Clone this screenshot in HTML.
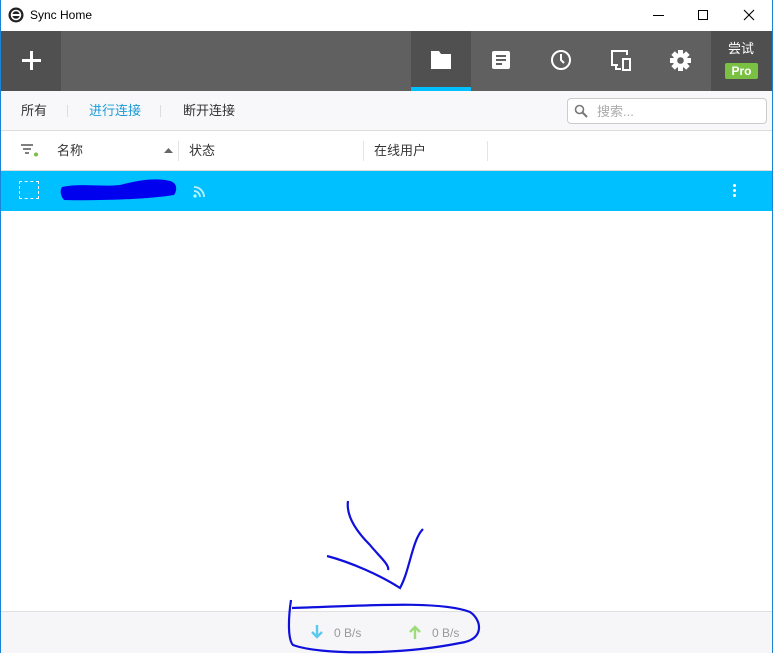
<!DOCTYPE html>
<html><head><meta charset="utf-8"><style>
*{margin:0;padding:0;box-sizing:border-box}
body{width:773px;height:655px;overflow:hidden;background:#fff;font-family:"Liberation Sans","Noto Sans CJK SC",sans-serif;position:relative}
.win{position:absolute;left:0;top:0;width:773px;height:653px;border:1px solid #1883d7;border-top:none}
.abs{position:absolute}
.cn{font-size:13px;color:#333;line-height:16px}
</style></head><body>
<div class="win"></div>
<!-- title -->
<svg class="abs" style="left:8px;top:7px" width="16" height="16" viewBox="0 0 16 16"><circle cx="8" cy="8" r="7.5" fill="#222"/><circle cx="8" cy="8" r="4.5" fill="none" stroke="#fff" stroke-width="1.5"/><rect x="3" y="7" width="10" height="2" fill="#fff"/></svg>
<div class="abs" style="left:30px;top:8px;font-size:12px;color:#000">Sync Home</div>
<div class="abs" style="left:653px;top:15px;width:11px;height:1px;background:#000"></div>
<div class="abs" style="left:698px;top:10px;width:10px;height:10px;border:1px solid #000"></div>
<svg class="abs" style="left:743px;top:9px" width="12" height="12"><path d="M1 1L11 11M11 1L1 11" stroke="#000" stroke-width="1.1"/></svg>
<!-- toolbar -->
<div class="abs" style="left:1px;top:31px;width:771px;height:60px;background:#606060"></div>
<div class="abs" style="left:1px;top:31px;width:60px;height:60px;background:#505050"></div>
<div class="abs" style="left:22px;top:59px;width:19px;height:3px;background:#fff"></div>
<div class="abs" style="left:30px;top:51px;width:3px;height:19px;background:#fff"></div>
<div class="abs" style="left:411px;top:31px;width:60px;height:60px;background:#505050"></div>
<div class="abs" style="left:411px;top:87px;width:60px;height:4px;background:#00c0ff"></div>
<svg class="abs" style="left:431px;top:51px" width="20" height="18"><path d="M0 0h8l2 3h10v15H0z" fill="#fff"/></svg>
<svg class="abs" style="left:491px;top:50px" width="20" height="20"><rect x="1" y="1" width="18" height="18" rx="2" fill="#fff"/><path d="M5 6h10M5 10h10M5 14h6" stroke="#606060" stroke-width="2"/></svg>
<svg class="abs" style="left:550px;top:49px" width="22" height="22"><circle cx="11" cy="11" r="9" fill="none" stroke="#fff" stroke-width="2"/><path d="M11 5v6l3 3" stroke="#fff" stroke-width="2" fill="none"/></svg>
<svg class="abs" style="left:611px;top:50px" width="22" height="22"><path d="M7 15H1V1h15v4" stroke="#fff" stroke-width="2" fill="none"/><rect x="12" y="9" width="7" height="11" fill="none" stroke="#fff" stroke-width="2"/><path d="M5 15v4h5" stroke="#fff" stroke-width="2" fill="none"/></svg>
<svg class="abs" style="left:670px;top:50px" width="21" height="21" viewBox="-10.5 -10.5 21 21"><g fill="#fff"><circle r="7.5"/><rect x="-2.5" y="-10.5" width="5" height="21"/><rect x="-2.5" y="-10.5" width="5" height="21" transform="rotate(45)"/><rect x="-2.5" y="-10.5" width="5" height="21" transform="rotate(90)"/><rect x="-2.5" y="-10.5" width="5" height="21" transform="rotate(135)"/></g><circle r="3.3" fill="#606060"/></svg>
<div class="abs" style="left:711px;top:31px;width:61px;height:60px;background:#4f4f4f"></div>
<div class="abs" style="left:728px;top:41px;font-size:13px;color:#fff;line-height:16px">尝试</div>
<div class="abs" style="left:725px;top:63px;width:33px;height:16px;background:#7ac143;border-radius:2px;color:#fff;font-size:12px;font-weight:bold;text-align:center;line-height:16px">Pro</div>
<!-- filter bar -->
<div class="abs" style="left:1px;top:91px;width:771px;height:40px;background:#f8f8fa;border-bottom:1px solid #ddd"></div>
<div class="abs cn" style="left:21px;top:103px">所有</div>
<div class="abs" style="left:67px;top:105px;width:1px;height:12px;background:#ddd"></div>
<div class="abs cn" style="left:89px;top:103px;color:#1a9bd7">进行连接</div>
<div class="abs" style="left:160px;top:105px;width:1px;height:12px;background:#ddd"></div>
<div class="abs cn" style="left:183px;top:103px">断开连接</div>
<div class="abs" style="left:567px;top:98px;width:200px;height:26px;border:1px solid #ccc;border-radius:4px;background:#fff"></div>
<svg class="abs" style="left:574px;top:104px" width="14" height="14"><circle cx="5.5" cy="5.5" r="4" fill="none" stroke="#777" stroke-width="1.6"/><path d="M8.5 8.5L13 13" stroke="#777" stroke-width="2"/></svg>
<div class="abs" style="left:597px;top:104px;font-size:13px;color:#aaa;line-height:16px">搜索...</div>
<!-- header -->
<svg class="abs" style="left:21px;top:144px" width="18" height="14"><path d="M0 1h12M2 5h8M4 9h4" stroke="#555" stroke-width="1.6"/><circle cx="15" cy="10.5" r="2" fill="#7ac143"/></svg>
<div class="abs cn" style="left:57px;top:143px">名称</div>
<svg class="abs" style="left:164px;top:148px" width="9" height="5"><path d="M0 5L4.5 0L9 5z" fill="#666"/></svg>
<div class="abs" style="left:178px;top:141px;width:1px;height:20px;background:#e4e4e4"></div>
<div class="abs cn" style="left:189px;top:143px">状态</div>
<div class="abs" style="left:363px;top:141px;width:1px;height:20px;background:#e4e4e4"></div>
<div class="abs cn" style="left:374px;top:143px">在线用户</div>
<div class="abs" style="left:487px;top:141px;width:1px;height:20px;background:#e4e4e4"></div>
<div class="abs" style="left:1px;top:170px;width:771px;height:1px;background:#ddd"></div>
<!-- row -->
<div class="abs" style="left:1px;top:171px;width:771px;height:40px;background:#00c0ff"></div>
<div class="abs" style="left:19px;top:181px;width:20px;height:18px;border:1px dashed #fff"></div>
<svg class="abs" style="left:60px;top:175px" width="120" height="28"><path d="M2 12C20 8 40 12 60 10C75 6 95 2 110 6C118 8 117 16 114 20C90 24 40 26 4 25C0 20 0 15 2 12z" fill="#0000ee"/></svg>
<svg class="abs" style="left:193px;top:185px" width="13" height="13"><circle cx="2" cy="11" r="1.6" fill="#bfe"/><path d="M1 6a6 6 0 0 1 6 6M1 2a10 10 0 0 1 10 10" stroke="#bfeeff" stroke-width="1.8" fill="none"/></svg>
<div class="abs" style="left:733px;top:184px;width:3px;height:3px;background:#fff;border-radius:50%;box-shadow:0 5px #fff,0 10px #fff"></div>
<!-- footer -->
<div class="abs" style="left:1px;top:611px;width:771px;height:42px;background:#f6f6f8;border-top:1px solid #e0e0e0"></div>
<svg class="abs" style="left:311px;top:625px" width="12" height="14"><path d="M6 0v12M1 7l5 5 5-5" stroke="#5bc8f0" stroke-width="2.4" fill="none"/></svg>
<div class="abs" style="left:334px;top:626px;font-size:12px;color:#999">0 B/s</div>
<svg class="abs" style="left:409px;top:625px" width="12" height="14"><path d="M6 14V2M1 7l5-5 5 5" stroke="#9edb7a" stroke-width="2.4" fill="none"/></svg>
<div class="abs" style="left:432px;top:626px;font-size:12px;color:#999">0 B/s</div>
<!-- scribbles -->
<svg class="abs" style="left:0;top:0" width="773" height="655"><g fill="none" stroke="#1010dd" stroke-width="2.2"><path d="M348 501C346 515 355 530 370 545C378 555 390 565 388 570"/><path d="M327 556C350 562 380 575 400 588C410 570 412 540 423 529"/><path d="M291 600C288 620 288 640 293 645C320 655 400 655 460 643C485 640 482 620 470 612C440 600 360 606 292 608"/></g></svg>
</body></html>
